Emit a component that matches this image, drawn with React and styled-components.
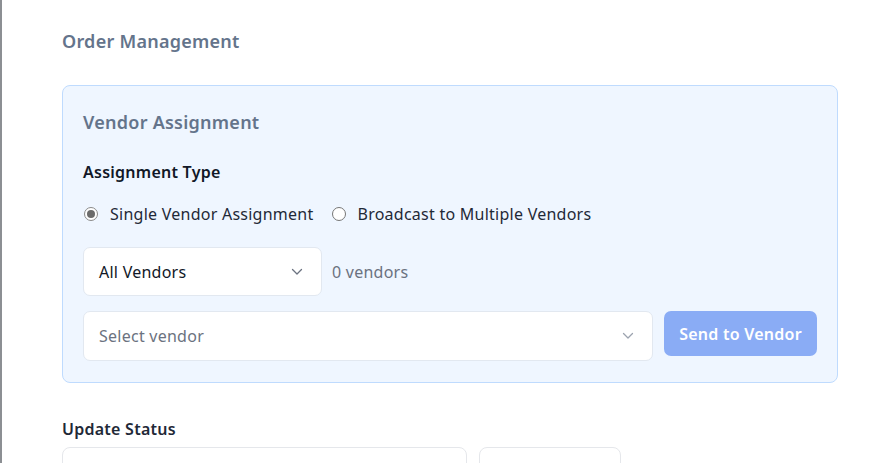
import styled, { createGlobalStyle } from "styled-components";

const GlobalStyle = createGlobalStyle`
  html, body {
    margin: 0;
    background: #ffffff;
  }
  body {
    font-family: "Noto Sans", "Open Sans", sans-serif;
    color: #111827;
    border-left: 2px solid #8c8f93;
    min-height: 463px;
    box-sizing: border-box;
    letter-spacing: 0.25px;
  }
`;

const Page = styled.div`
  padding: 27px 0 0 60px;
  max-width: 776px;
`;

const Heading = styled.h2`
  margin: 0 0 30px;
  font-size: 18px;
  line-height: 28px;
  font-weight: 600;
  color: #64748b;
`;

const Card = styled.section`
  background: #eff6ff;
  border: 1px solid #bfdbfe;
  border-radius: 8px;
  padding: 22px 20px 21px;
`;

const CardTitle = styled.h3`
  margin: 0 0 24px;
  font-size: 18px;
  line-height: 28px;
  font-weight: 600;
  color: #64748b;
`;

const Label = styled.div`
  font-size: 16px;
  line-height: 24px;
  font-weight: 600;
  color: ${(p) => p.$color || "#111827"};
  margin-bottom: ${(p) => p.$mb || "18px"};
`;

const RadioRow = styled.div`
  display: flex;
  align-items: center;
  gap: 17px;
  margin-bottom: 21px;
`;

const RadioOption = styled.label`
  display: flex;
  align-items: center;
  gap: 12px;
  font-size: 16px;
  line-height: 24px;
  color: #1f2937;
`;

const RadioDot = styled.span`
  width: 14px;
  height: 14px;
  box-sizing: border-box;
  border-radius: 50%;
  border: 1px solid ${(p) => (p.$checked ? "#8a8a8a" : "#767676")};
  background: #ffffff;
  display: flex;
  align-items: center;
  justify-content: center;
  margin-left: 1px;

  &::after {
    content: "";
    display: ${(p) => (p.$checked ? "block" : "none")};
    width: 8px;
    height: 8px;
    border-radius: 50%;
    background: #6b6b6b;
  }
`;

const Row = styled.div`
  display: flex;
  align-items: ${(p) => p.$align || "center"};
  gap: ${(p) => p.$gap || "10px"};
  margin-bottom: ${(p) => p.$mb || "0"};
`;

const Select = styled.div`
  box-sizing: border-box;
  width: ${(p) => p.$width || "auto"};
  flex: ${(p) => p.$flex || "none"};
  height: ${(p) => p.$height || "49px"};
  background: #ffffff;
  border: 1px solid #e2e8f0;
  border-radius: 7px;
  display: flex;
  align-items: center;
  justify-content: space-between;
  padding: 0 18px 0 15px;
  font-size: 16px;
  color: ${(p) => (p.$placeholder ? "#6b7280" : "#111827")};
`;

const Count = styled.span`
  font-size: 16px;
  color: #6b7280;
`;

const Button = styled.button`
  box-sizing: border-box;
  width: 153px;
  height: 45px;
  border: none;
  border-radius: 7px;
  background: #8aacf5;
  color: #ffffff;
  font-family: inherit;
  letter-spacing: inherit;
  font-size: 16px;
  font-weight: 600;
  cursor: not-allowed;
`;

const StatusSection = styled.div`
  margin-top: 34px;
`;

const Input = styled.div`
  box-sizing: border-box;
  width: ${(p) => p.$width};
  height: 48px;
  background: #ffffff;
  border: 1px solid #e5e7eb;
  border-radius: 8px;
`;

const Chevron = ({ color = "#6b7280" }) => (
  <svg width="12" height="8" viewBox="0 0 12 8" fill="none">
    <path d="M1.5 1.5 L6 6 L10.5 1.5" stroke={color} strokeWidth="1.3" strokeLinecap="round" strokeLinejoin="round" />
  </svg>
);

export default function App() {
  return (
    <>
      <GlobalStyle />
      <Page>
        <Heading>Order Management</Heading>
        <Card>
          <CardTitle>Vendor Assignment</CardTitle>
          <Label $mb="18px">Assignment Type</Label>
          <RadioRow>
            <RadioOption>
              <RadioDot $checked />
              Single Vendor Assignment
            </RadioOption>
            <RadioOption>
              <RadioDot />
              Broadcast to Multiple Vendors
            </RadioOption>
          </RadioRow>
          <Row $mb="15px">
            <Select $width="239px">
              All Vendors
              <Chevron />
            </Select>
            <Count>0 vendors</Count>
          </Row>
          <Row $align="flex-start" $gap="11px">
            <Select $flex="1" $height="50px" $placeholder>
              Select vendor
              <Chevron color="#9ca3af" />
            </Select>
            <Button disabled>Send to Vendor</Button>
          </Row>
        </Card>
        <StatusSection>
          <Label $mb="6px" $color="#1f2937">Update Status</Label>
          <Row $gap="12px">
            <Input $width="405px" />
            <Input $width="142px" />
          </Row>
        </StatusSection>
      </Page>
    </>
  );
}
